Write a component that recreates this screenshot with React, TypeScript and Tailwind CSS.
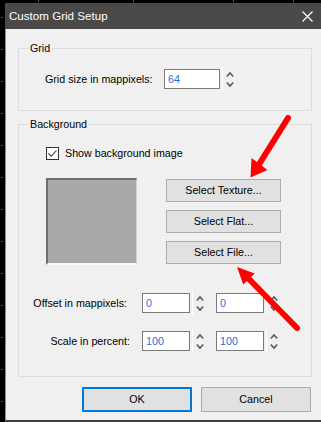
import React from "react";

const Spin = () => (
  <>
    <div className="ml-[2px] w-px h-[24px] bg-white self-center" />
    <svg className="ml-[3px]" width="8" height="20" viewBox="0 0 8 20">
      <path d="M0.8 7.5 L4 4 L7.2 7.5" fill="none" stroke="#5a5a5a" strokeWidth="1.6" />
      <path d="M0.8 13.5 L4 17 L7.2 13.5" fill="none" stroke="#5a5a5a" strokeWidth="1.6" />
    </svg>
  </>
);

const NumBox = ({ v, w }: { v: string; w: string }) => (
  <div className={`${w} h-[20px] bg-white border border-[#7a7a7a] text-[#1f6fe0] pl-[3px] flex items-center`}>{v}</div>
);

const Btn = ({ children }: { children: React.ReactNode }) => (
  <div className="w-[115px] h-[23px] bg-[#e1e1e1] border border-[#adadad] flex items-center justify-center text-black">
    {children}
  </div>
);

export default function App() {
  const dotsY = [17, 49, 81, 113, 145, 177, 209, 241, 273, 305, 337, 369, 401];
  return (
    <div className="relative w-[321px] h-[422px] bg-black overflow-hidden font-['Liberation_Sans',Arial,sans-serif] text-[10.7px] text-black">
      <div className="absolute left-[1px] top-0 flex flex-col">
        {dotsY.map((y) => (
          <div key={y} className="absolute w-[2px] h-px bg-[#4a5a7a]" style={{ top: y, left: 0 }} />
        ))}
      </div>
      {[38, 133, 233, 293].map((x) => (
        <div key={x} className="absolute h-[2px] w-px bg-[#4a5a7a]" style={{ left: x, top: 0 }} />
      ))}
      <div className="flex flex-col h-full pt-[3px] pl-[5px]">
        <div className="h-[26px] bg-[#4a4947] flex items-center justify-between pl-[4px] pr-[8px] shrink-0">
          <span className="text-white text-[11.6px]">Custom Grid Setup</span>
          <svg width="11" height="11" viewBox="0 0 11 11">
            <path d="M0.5 0.5 L10.5 10.5 M10.5 0.5 L0.5 10.5" stroke="white" strokeWidth="1.2" />
          </svg>
        </div>
        <div className="flex-1 bg-[#f0f0f0] border-l border-[#8a8a8a] border-b-2 border-b-[#3d3d3d] pl-[12px] flex flex-col">
          <fieldset className="mt-[11px] w-[294px] border border-[#dcdcdc] pt-[13px] pb-[21px]">
            <legend className="ml-[9px] px-[2px] leading-[16px]">Grid</legend>
            <div className="flex items-center h-[20px] pl-[26px]">
              <div className="w-[119px]">Grid size in mappixels:</div>
              <NumBox v="64" w="w-[56px]" />
              <Spin />
            </div>
          </fieldset>
          <fieldset className="mt-[5px] w-[294px] border border-[#dcdcdc] pt-[15px] pb-[25px]">
            <legend className="ml-[9px] px-[2px] leading-[16px]">Background</legend>
            <div className="flex items-center h-[13px] pl-[27px]">
              <div className="w-[13px] h-[13px] border border-[#333] bg-white flex items-center justify-center">
                <svg width="11" height="11" viewBox="0 0 11 11">
                  <path d="M1.5 5.5 L4.2 8.3 L9.5 2.5" fill="none" stroke="#333" strokeWidth="1.1" />
                </svg>
              </div>
              <span className="ml-[6px]">Show background image</span>
            </div>
            <div className="flex mt-[18px] pl-[27px]">
              <div className="w-[91px] h-[87px] bg-[#a9a9a9] border-t-2 border-l-2 border-t-[#6e6e6e] border-l-[#6e6e6e] border-r border-r-[#d0d0d0] border-b-2 border-b-[#fafafa]" />
              <div className="ml-[29px] mt-[1px] flex flex-col gap-[8px]">
                <Btn>Select Texture...</Btn>
                <Btn>Select Flat...</Btn>
                <Btn>Select File...</Btn>
              </div>
            </div>
            <div className="flex items-center h-[20px] mt-[28px]">
              <div className="w-[123px] text-right pr-[15px]">Offset in mappixels:</div>
              <NumBox v="0" w="w-[48px]" />
              <Spin />
              <div className="ml-[12px]" />
              <NumBox v="0" w="w-[48px]" />
              <Spin />
            </div>
            <div className="flex items-center h-[20px] mt-[18px]">
              <div className="w-[123px] text-right pr-[12px]">Scale in percent:</div>
              <NumBox v="100" w="w-[48px]" />
              <Spin />
              <div className="ml-[12px]" />
              <NumBox v="100" w="w-[48px]" />
              <Spin />
            </div>
          </fieldset>
          <div className="flex mt-[10px] pl-[64px] gap-[9px]">
            <div className="w-[110px] h-[25px] bg-[#e1e1e1] border-2 border-[#0078d7] flex items-center justify-center">OK</div>
            <div className="w-[110px] h-[25px] bg-[#e1e1e1] border border-[#adadad] flex items-center justify-center">Cancel</div>
          </div>
        </div>
      </div>
      <svg className="absolute left-0 top-0 pointer-events-none" width="321" height="422" viewBox="0 0 321 422">
        <line x1="288" y1="118" x2="258" y2="166" stroke="#ff0000" strokeWidth="6" strokeLinecap="round" />
        <polygon points="250.5,177.5 251.5,158 267.5,170" fill="#ff0000" />
        <line x1="297" y1="328" x2="248" y2="278" stroke="#ff0000" strokeWidth="6" strokeLinecap="round" />
        <polygon points="237,267 254.7,273.4 243.3,284.6" fill="#ff0000" />
      </svg>
    </div>
  );
}
